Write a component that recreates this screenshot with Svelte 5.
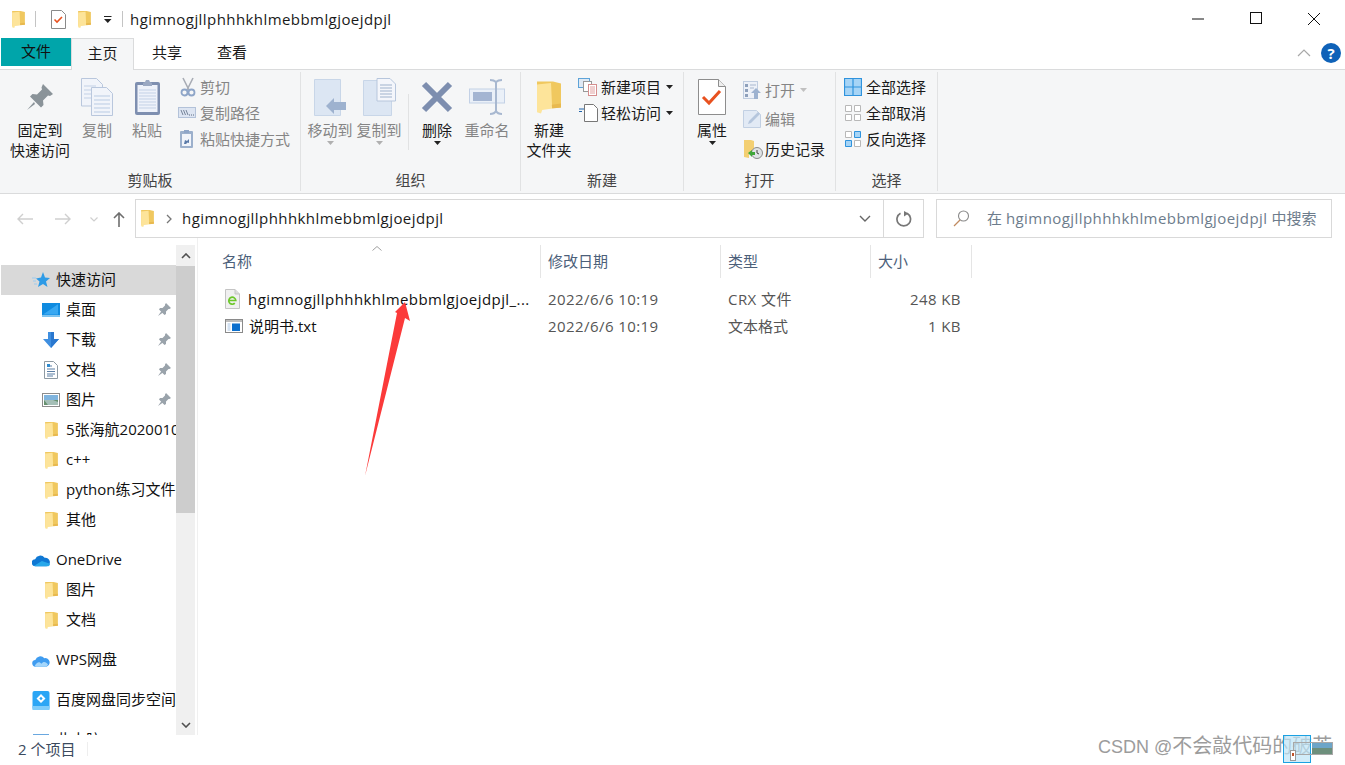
<script lang="ts">
	const title = 'hgimnogjllphhhkhlmebbmlgjoejdpjl';

	const quick = [
		{ label: '桌面', icon: desktop, pin: true },
		{ label: '下载', icon: download, pin: true },
		{ label: '文档', icon: doc, pin: true },
		{ label: '图片', icon: pics, pin: true },
		{ label: '5张海航20200106', icon: navFolder },
		{ label: 'c++', icon: navFolder },
		{ label: 'python练习文件夹', icon: navFolder },
		{ label: '其他', icon: navFolder }
	];
</script>

{#snippet folder(w, h)}
	<svg width={w} height={h} viewBox="1 1 12 16">
		<path d="M1 1h8l4 1v12l-8 .5-4 .5z" fill="#f0c85f" />
		<path d="M1 2.500l7-.8.6 12.800-5 .7L3 17l-2-.6z" fill="#fde49a" />
		<path d="M8.600 14.500L13 14V12l-4.600.6z" fill="#e8b94f" />
	</svg>
{/snippet}

{#snippet navFolder()}
	{@render folder(13, 17)}
{/snippet}

{#snippet desktop()}
	<svg width="18" height="14" viewBox="0 0 18 14"><rect width="18" height="12.500" fill="#0f8be0" /><path d="M1 11.500L16 1.200v10.300z" fill="#38a8f2" /><rect y="12.500" width="18" height="1.500" fill="#7cc3ef" /></svg>
{/snippet}

{#snippet download()}
	<svg width="18" height="16" viewBox="0 0 18 16"><path d="M6 0h6v7h5l-8 9-8-9h5z" fill="#3f8fe0" /><path d="M9 0h3v7h5l-8 9z" fill="#2a78cf" /></svg>
{/snippet}

{#snippet doc()}
	<svg width="14" height="18" viewBox="0 0 14 18"><path d="M.5.5h9l4 4v13H.5z" fill="#fff" stroke="#8e9aa3" /><path d="M3 5h5M3 8h8M3 10.500h8M3 13h8M3 15h6" stroke="#5b7ea5" /><path d="M3 3h3v3H3z" fill="#2f8bcf" /></svg>
{/snippet}

{#snippet pics()}
	<svg width="18" height="14" viewBox="0 0 18 14"><rect x=".5" y=".5" width="17" height="13" fill="#fff" stroke="#8c8c8c" /><rect x="2" y="2" width="14" height="5" fill="#7fb4de" /><rect x="2" y="7" width="14" height="5" fill="#67906f" /><path d="M2 7h9l5 2v3H6z" fill="#cfe0e8" opacity=".6" /></svg>
{/snippet}

{#snippet pinIcon()}
	<svg width="13" height="13" viewBox="0 0 13 13"><path d="M8 0l5 5-1.500 1-1 0-2.500 2.500V11L6.500 12 1 6.500 2 5h2.500L7 2.500v-1z" fill="#9aa3ab" /><path d="M3.500 8L0 13l5-3.500z" fill="#9aa3ab" /></svg>
{/snippet}

{#snippet caret(color)}
	<svg class="caret" width="7" height="4" viewBox="0 0 7 4"><path d="M0 0h7L3.500 4z" fill={color} /></svg>
{/snippet}

<div class="window">
	<header class="titlebar">
		<span class="qa-folder">{@render folder(13, 17)}</span>
		<i class="qa-sep"></i>
		<svg class="qa-check" width="15" height="19" viewBox="0 0 15 19"><path d="M.5.5h10l4 4v14H.5z" fill="#fff" stroke="#8a8a8a" /><path d="M3.500 9.500l2.500 2.500 5-5" fill="none" stroke="#e8511f" stroke-width="1.600" /></svg>
		<span class="qa-folder2">{@render folder(13, 17)}</span>
		<svg class="qa-more" width="8" height="7" viewBox="0 0 8 7"><path d="M0 0h7.500v1H0zM0 3h7.500L3.800 7z" fill="#222" /></svg>
		<i class="qa-sep second"></i>
		<span class="win-title latin">{title}</span>
		<div class="win-controls">
			<svg width="14" height="14" viewBox="0 0 14 14"><path d="M1 7h12" stroke="#111" /></svg>
			<svg width="14" height="14" viewBox="0 0 14 14"><rect x="1.500" y=".5" width="11" height="11" fill="none" stroke="#111" /></svg>
			<svg width="14" height="14" viewBox="0 0 14 14"><path d="M1 1l12 12M13 1L1 13" stroke="#111" /></svg>
		</div>
	</header>

	<nav class="tabs">
		<span class="tab tab-file">文件</span>
		<span class="tab tab-home">主页</span>
		<span class="tab tab-share">共享</span>
		<span class="tab tab-view">查看</span>
		<div class="tabs-right">
			<svg width="14" height="8" viewBox="0 0 14 8"><path d="M1 7l6-6 6 6" fill="none" stroke="#a8a8a8" stroke-width="1.200" /></svg>
			<span class="help">?</span>
		</div>
	</nav>

	<section class="ribbon">
		<div class="group g-clip">
			<div class="group-body">
				<div class="big w60">
					<span class="big-icon">
						<svg width="28" height="28" viewBox="0 0 28 28"><path d="M17 1l10 10-3 2-2-.5-5 5 .500 4.500-2.500 2.500L4 13.500 6.500 11l4.500.5 5-5-.5-2z" fill="#8a9399" /><path d="M8 19L1 27l8-6z" fill="#8a9399" /></svg>
					</span>
					<span class="big-label">固定到<br />快速访问</span>
				</div>
				<div class="big w54 off">
					<span class="big-icon">
						<svg width="32" height="38" viewBox="0 0 32 38"><path d="M.5.5h15l6 6V28H.5z" fill="#f1f4fa" stroke="#b9c7dd" /><path d="M3 8h12M3 12h15M3 16h15M3 20h15" stroke="#c3d1e6" /><path d="M10.500 9.500h15l6 6v22h-21z" fill="#f1f4fa" stroke="#b9c7dd" /><path d="M13 18h16M13 22h16M13 26h16M13 30h16M13 34h16" stroke="#b9cbe3" /></svg>
					</span>
					<span class="big-label">复制</span>
				</div>
				<div class="big w46 off">
					<span class="big-icon">
						<svg width="27" height="37" viewBox="0 0 27 37"><rect x="1" y="3" width="25" height="33" rx="2" fill="#7e8fb0" /><rect x="3.500" y="6" width="20" height="27" fill="#eef2fa" /><path d="M5 11h17M5 14h17M5 17h17M5 20h17M5 23h17M5 26h17M5 29h17" stroke="#c3d1e6" /><path d="M9 4l2-1 1-2h3l1 2 2 1v3H9z" fill="#9aa8c2" /></svg>
					</span>
					<span class="big-label">粘贴</span>
				</div>
				<div class="small-col clip-col off">
					<div class="small">
						<svg width="20" height="20" viewBox="0 0 20 20"><path d="M5 1l6 12M15 1L9 13" stroke="#a8adb5" stroke-width="1.600" /><circle cx="6.500" cy="15.500" r="3" fill="none" stroke="#8ea5c8" stroke-width="1.800" /><circle cx="13.500" cy="15.500" r="3" fill="none" stroke="#8ea5c8" stroke-width="1.800" /></svg>
						<span>剪切</span>
					</div>
					<div class="small">
						<svg width="20" height="12" viewBox="0 0 20 12"><rect x=".5" y=".5" width="17" height="10" fill="#dde5f2" stroke="#b3c2d9" /><path d="M3 3l2 5M5.500 3l2 5M8 3l2 5" stroke="#5a6a82" stroke-width=".8" /><path d="M11 8h1M13 8h1M15 8h1" stroke="#5a6a82" /></svg>
						<span>复制路径</span>
					</div>
					<div class="small">
						<svg width="20" height="20" viewBox="0 0 20 20"><rect x="2" y="2" width="13" height="17" rx="1" fill="#9cb0cc" /><rect x="4" y="5" width="9" height="12" fill="#f1f4fa" /><path d="M6 1h5v3H6z" fill="#8ea5c8" /><path d="M6 15l1-4 2 1 2-2v4l-1.500-.5L8 15z" fill="#5a7aa8" /></svg>
						<span>粘贴快捷方式</span>
					</div>
				</div>
			</div>
			<div class="group-name">剪贴板</div>
		</div>

		<div class="group g-org">
			<div class="group-body">
				<div class="big w50 off">
					<span class="big-icon">
						<svg width="33" height="37" viewBox="0 0 33 37"><path d="M.5.5h26v36H.5z" fill="#dce6f3" stroke="#c8d6e8" /><path d="M12 27L20 19v4h12v8H20v4z" fill="#9eb2cf" /></svg>
					</span>
					<span class="big-label">移动到</span>
					{@render caret('#b0b0b0')}
				</div>
				<div class="big w48 off">
					<span class="big-icon">
						<svg width="33" height="38" viewBox="0 0 33 38"><path d="M.5 2.500h28v35H.5z" fill="#dce6f3" stroke="#c8d6e8" /><path d="M14 .5h13l5.500 5.500v17H14z" fill="#f4f6fb" stroke="#b7c6dc" /><path d="M17 7h12M17 10h12M17 13h12M17 16h12M17 19h12" stroke="#9fb2cc" /></svg>
					</span>
					<span class="big-label">复制到</span>
					{@render caret('#b0b0b0')}
				</div>
				<i class="inner-sep"></i>
				<div class="big w46">
					<span class="big-icon">
						<svg width="32" height="32" viewBox="0 0 32 32"><path d="M3 3l26 26M29 3L3 29" stroke="#7d8eaf" stroke-width="6" /></svg>
					</span>
					<span class="big-label">删除</span>
					{@render caret('#222')}
				</div>
				<div class="big w54 off">
					<span class="big-icon">
						<svg width="36" height="36" viewBox="0 0 36 36"><rect x=".5" y="10" width="35" height="14" fill="#eaf0f8" stroke="#c3d1e6" /><rect x="4" y="13" width="19" height="9" fill="#a4b5d2" /><path d="M21 1c4 0 5 1 6 2 1-1 2-2 6-2M27 3v29M21 35c4 0 5-1 6-3 1 2 2 3 6 3" fill="none" stroke="#a8b8d0" stroke-width="2" /></svg>
					</span>
					<span class="big-label">重命名</span>
				</div>
			</div>
			<div class="group-name">组织</div>
		</div>

		<div class="group g-new">
			<div class="group-body">
				<div class="big w48">
					<span class="big-icon">{@render folder(24, 35)}</span>
					<span class="big-label">新建<br />文件夹</span>
				</div>
				<div class="small-col new-col">
					<div class="small">
						<svg width="20" height="18" viewBox="0 0 20 18"><rect x=".5" y=".5" width="11" height="9" fill="#dfe9f4" stroke="#5da3d8" /><rect x="5.500" y="3.500" width="8" height="10" fill="#fff" stroke="#999" /><rect x="10.500" y="6.500" width="8" height="11" fill="#fff" stroke="#d58e8e" /><path d="M12 9h5M12 11h5M12 13h5M12 15h5" stroke="#e0a0a0" /></svg>
						<span>新建项目</span>
						{@render caret('#222')}
					</div>
					<div class="small">
						<svg width="20" height="18" viewBox="0 0 20 18"><path d="M6.500.5h9l4 4v13h-13z" fill="#fff" stroke="#777" /><path d="M1 5h5M1 7.500h3" stroke="#2165ac" stroke-width="1.200" /></svg>
						<span>轻松访问</span>
						{@render caret('#222')}
					</div>
				</div>
			</div>
			<div class="group-name">新建</div>
		</div>

		<div class="group g-open">
			<div class="group-body">
				<div class="big w48">
					<span class="big-icon">
						<svg width="28" height="36" viewBox="0 0 28 36"><path d="M.5.5h20l7 7v28H.5z" fill="#fff" stroke="#8d8d8d" /><path d="M20.500.5v7h7" fill="#eee" stroke="#8d8d8d" /><path d="M5 18l6 6L22 12" fill="none" stroke="#e8511f" stroke-width="3" /></svg>
					</span>
					<span class="big-label">属性</span>
					{@render caret('#222')}
				</div>
				<div class="small-col open-col">
					<div class="small off">
						<svg width="20" height="18" viewBox="0 0 20 18"><rect x=".5" y=".5" width="14" height="17" fill="#edf1f8" stroke="#c0cde0" /><path d="M2 3h3v3H2zM2 8h3v3H2zM2 13h3v3H2z" fill="#8ea0bb" /><path d="M7 4h6M7 7h4" stroke="#a9b8cf" /><path d="M13 7l5 5h-3v6h-4v-6H8z" fill="#9db2d0" /></svg>
						<span>打开</span>
						{@render caret('#c0c0c0')}
					</div>
					<div class="small off">
						<svg width="20" height="18" viewBox="0 0 20 18"><path d="M.5.500h13l4 4v13H.5z" fill="#e2eaf5" stroke="#c2d0e3" /><path d="M5 14l1-3 9-9 2 2-9 9z" fill="#b5c6dd" /></svg>
						<span>编辑</span>
					</div>
					<div class="small">
						<svg width="20" height="20" viewBox="0 0 20 20"><path d="M1 1h7l3 1v12l-5 1v4l-5-1z" fill="#f3cf72" /><circle cx="14" cy="14" r="5.500" fill="#dfe3e6" stroke="#8a8a8a" /><path d="M14 11v3l2 1" fill="none" stroke="#444" /><path d="M5 14l4-3v2h3v3H9v2z" fill="#3fa63a" /></svg>
						<span>历史记录</span>
					</div>
				</div>
			</div>
			<div class="group-name">打开</div>
		</div>

		<div class="group g-select">
			<div class="group-body">
				<div class="small-col select-col">
					<div class="small">
						<svg width="18" height="18" viewBox="0 0 18 18"><path d="M.5.5h17v17H.5zM9 .5v17M.5 9h17" fill="#a6d4f6" stroke="#2f93dd" stroke-width="1.200" /></svg>
						<span>全部选择</span>
					</div>
					<div class="small">
						<svg width="18" height="18" viewBox="0 0 18 18"><path d="M1.500 1.500h6v6h-6zM10.500 1.500h6v6h-6zM1.500 10.500h6v6h-6zM10.500 10.500h6v6h-6z" fill="#fff" stroke="#b8b8b8" /></svg>
						<span>全部取消</span>
					</div>
					<div class="small">
						<svg width="18" height="18" viewBox="0 0 18 18"><path d="M1.500 1.500h6v6h-6zM10.500 10.500h6v6h-6z" fill="#fff" stroke="#b8b8b8" /><path d="M10.500 1.500h6v6h-6zM1.500 10.500h6v6h-6z" fill="#a6d4f6" stroke="#2f93dd" /></svg>
						<span>反向选择</span>
					</div>
				</div>
			</div>
			<div class="group-name">选择</div>
		</div>
	</section>

	<div class="addressbar">
		<div class="nav-buttons">
			<svg class="nb-back" width="16" height="12" viewBox="0 0 16 12"><path d="M6 1L1 6l5 5M1 6h15" fill="none" stroke="#cfcfcf" stroke-width="1.400" /></svg>
			<svg class="nb-forward" width="16" height="12" viewBox="0 0 16 12"><path d="M10 1l5 5-5 5M15 6H0" fill="none" stroke="#cfcfcf" stroke-width="1.400" /></svg>
			<svg class="nb-down" width="8" height="5" viewBox="0 0 8 5"><path d="M.5.500L4 4 7.500.5" fill="none" stroke="#cfcfcf" stroke-width="1.200" /></svg>
			<svg class="nb-up" width="12" height="15" viewBox="0 0 12 15"><path d="M1 6l5-5 5 5M6 1v14" fill="none" stroke="#6e6e6e" stroke-width="1.600" /></svg>
		</div>
		<div class="address">
			<span class="addr-folder">{@render folder(13, 17)}</span>
			<svg class="addr-chev" width="6" height="10" viewBox="0 0 6 10"><path d="M1 1l4 4-4 4" fill="none" stroke="#777" stroke-width="1.300" /></svg>
			<span class="addr-text latin">{title}</span>
			<svg class="addr-down" width="12" height="7" viewBox="0 0 12 7"><path d="M1 1l5 5 5-5" fill="none" stroke="#666" stroke-width="1.400" /></svg>
			<span class="addr-refresh">
				<svg width="16" height="16" viewBox="0 0 16 16"><path d="M11 2.200A6.800 6.800 0 1 1 4.500 2.200" fill="none" stroke="#777" stroke-width="1.700" /><path d="M8 0v5.500L12.500 2.500z" fill="#777" /></svg>
			</span>
		</div>
		<div class="search">
			<svg width="17" height="17" viewBox="0 0 17 17"><circle cx="10.500" cy="6" r="5" fill="none" stroke="#8a8a8a" stroke-width="1.100" /><path d="M7 10l-6 6" stroke="#c08a60" stroke-width="1.300" /></svg>
			<span>在 <span class="latin">{title}</span> 中搜索</span>
		</div>
	</div>

	<main class="content">
		<aside class="sidebar">
			<div class="tree">
				<div class="row head active">
					<svg width="18" height="17" viewBox="0 0 18 17"><path d="M11 0l2 5.500 5 .5-4 3.500L15.500 15 11 12l-5 3 1.500-5.500L4 6.500 9 5.500z" fill="#2e9be6" /><path d="M0 6h4M1 9h3M2 12h3" stroke="#9ccbef" /></svg>
					<span class="row-text">快速访问</span>
				</div>
				{#each quick as item}
					<div class="row child">
						<span class="row-icon">{@render item.icon()}</span>
						<span class="row-text">{item.label}</span>
						{#if item.pin}<span class="pin">{@render pinIcon()}</span>{/if}
					</div>
				{/each}
				<div class="row head gap">
					<svg width="20" height="13" viewBox="0 0 20 13"><path d="M4 13a4 4 0 0 1-.5-8A6 6 0 0 1 14 3.500 4.500 4.500 0 0 1 16 13z" fill="#0f78d4" /><path d="M2 12.500L11 7l9 3c0 2-1.500 3-3 3H4z" fill="#28a8ea" /></svg>
					<span class="row-text">OneDrive</span>
				</div>
				<div class="row child"><span class="row-icon">{@render navFolder()}</span><span class="row-text">图片</span></div>
				<div class="row child"><span class="row-icon">{@render navFolder()}</span><span class="row-text">文档</span></div>
				<div class="row head gap">
					<svg width="19" height="13" viewBox="0 0 19 13"><path d="M4 13a3.500 3.500 0 0 1-.5-7A5.500 5.500 0 0 1 13 4a4.500 4.500 0 0 1 2 9z" fill="#3f9cf0" /><path d="M3 12c2-4 5-5 7-2 2-3 5-2 7 1l-2 2H4z" fill="#a4d6fb" /></svg>
					<span class="row-text">WPS网盘</span>
				</div>
				<div class="row head gap">
					<svg width="17" height="19" viewBox="0 0 17 19"><rect width="17" height="19" rx="2" fill="#2ca6f5" /><rect y="15" width="17" height="4" fill="#7fcdfb" /><path d="M8.500 3l4.500 4.500L8.500 12 4 7.500zM8.500 5.800L6.800 7.500l1.700 1.700 1.700-1.700z" fill="#fff" /></svg>
					<span class="row-text">百度网盘同步空间</span>
				</div>
				<div class="row head gap">
					<svg width="18" height="15" viewBox="0 0 18 15"><rect x="1" y="1" width="16" height="10" fill="#6aa8e0" /></svg>
					<span class="row-text">此电脑</span>
				</div>
			</div>
			<div class="scrollbar">
				<span class="sb-btn">
					<svg width="10" height="6" viewBox="0 0 10 6"><path d="M1 5l4-4 4 4" fill="none" stroke="#505050" stroke-width="1.600" /></svg>
				</span>
				<span class="sb-track"><span class="sb-thumb"></span></span>
				<span class="sb-btn">
					<svg width="10" height="6" viewBox="0 0 10 6"><path d="M1 1l4 4 4-4" fill="none" stroke="#505050" stroke-width="1.600" /></svg>
				</span>
			</div>
		</aside>

		<div class="files">
			<div class="columns">
				<span>名称</span>
				<span>修改日期</span>
				<span>类型</span>
				<span>大小</span>
				<svg class="sort" width="10" height="5" viewBox="0 0 10 5"><path d="M.5 4.500L5 .5l4.500 4" fill="none" stroke="#a0a0a0" /></svg>
			</div>
			<div class="file first">
				<span class="fname latin">
					<svg class="crx-icon" width="15" height="20" viewBox="0 0 15 20"><path d="M.5.5h9.500l4.500 4.500v14.500H.5z" fill="#f0f0f0" stroke="#c4c4c4" /><path d="M10 .5V5h4.500" fill="#dcdcdc" stroke="#c4c4c4" /><path d="M3.800 11.500h7a3.500 3.500 0 1 0-1 2.700" fill="none" stroke="#6cc72a" stroke-width="1.700" /></svg>
					{title}_...
				</span>
				<span class="latin">2022/6/6 10:19</span>
				<span class="latin">CRX 文件</span>
				<span class="fsize latin">248 KB</span>
			</div>
			<div class="file">
				<span class="fname">
					<svg width="18" height="14" viewBox="0 0 18 14"><rect x=".5" y=".5" width="17" height="13" fill="#fff" stroke="#8a8a8a" /><rect x="1" y="1" width="16" height="2" fill="#bdbdbd" /><path d="M2.500 5h3M2.500 7h3M2.500 9h3M2.500 11h3" stroke="#a8c4e4" /><rect x="7" y="4.500" width="8" height="7.500" fill="#0c6fcd" /></svg>
					说明书.txt
				</span>
				<span class="latin">2022/6/6 10:19</span>
				<span>文本格式</span>
				<span class="fsize latin">1 KB</span>
			</div>
		</div>
	</main>

	<footer class="statusbar">
		<span>2 个项目</span>
		<i></i>
	</footer>

	<svg class="red-arrow" width="50" height="180" viewBox="0 0 50 180"><path d="M1 176L33 13 31 12 41 2 46 21 41 18z" fill="#fb3a3a" /></svg>
	<div class="watermark"><span>CSDN @</span>不会敲代码的破茧</div>
	<div class="drag-ghost"></div>
	<svg class="drag-thumb" width="52" height="28" viewBox="0 0 52 28">
		<rect x="9.500" y="7.500" width="39" height="12" fill="none" stroke="#a8a8a8" />
		<rect x="28" y="8" width="20" height="5" fill="#6da5c8" />
		<rect x="28" y="13" width="20" height="6" fill="#6d8f7c" />
		<rect x="6.500" y="15.500" width="5" height="10" fill="#fff" stroke="#999" />
		<rect x="8" y="18" width="2" height="3" fill="#c0532a" />
	</svg>
</div>

<style>
	:global(body) {
		margin: 0;
		background: #fff;
	}

	.window {
		position: relative;
		width: 1345px;
		height: 765px;
		overflow: hidden;
		display: flex;
		flex-direction: column;
		background: #fff;
		color: #1a1a1a;
		font-family: 'Open Sans', 'Noto Sans CJK SC', sans-serif;
		font-size: 15px;
		line-height: 20px;
	}

	i {
		display: block;
	}

	svg {
		display: block;
		flex: none;
	}

	/* Open Sans runs narrower than the original UI font on latin strings */
	.latin {
		letter-spacing: 0.43px;
	}

	/* title bar */
	.titlebar {
		height: 38px;
		flex: none;
		display: flex;
		align-items: center;
	}

	.qa-folder {
		margin-left: 12px;
	}

	.qa-sep {
		width: 1px;
		height: 16px;
		background: #c4c4c4;
		margin-left: 10px;
	}

	.qa-check {
		margin-left: 15px;
	}

	.qa-folder2 {
		margin-left: 12px;
	}

	.qa-more {
		margin-left: 13px;
	}

	.qa-sep.second {
		margin-left: 10px;
	}

	.win-title {
		margin-left: 7px;
	}

	.win-controls {
		margin-left: auto;
		display: flex;
		gap: 44px;
		margin-right: 24px;
		margin-top: -1px;
	}

	/* tabs */
	.tabs {
		height: 32px;
		flex: none;
		display: flex;
		position: relative;
		border-bottom: 1px solid #dadbdc;
		box-sizing: border-box;
	}

	.tab {
		display: flex;
		align-items: center;
		justify-content: center;
		height: 31px;
		box-sizing: border-box;
		padding-bottom: 3px;
	}

	.tab-file {
		width: 70px;
		height: 28px;
		margin-left: 1px;
		background: #00a5aa;
		color: #111;
		padding-bottom: 2px;
	}

	.tab-home {
		width: 63px;
		background: #f5f6f7;
		border: 1px solid #dadbdc;
		border-bottom: none;
		height: 32px;
		position: relative;
		z-index: 1;
	}

	.tab-share {
		width: 66px;
	}

	.tab-view {
		width: 64px;
	}

	.tabs-right {
		margin-left: auto;
		display: flex;
		align-items: center;
		gap: 10px;
		margin-right: 4px;
		margin-top: -2px;
	}

	.help {
		width: 20px;
		height: 20px;
		border-radius: 50%;
		background: #0f62b8;
		color: #fff;
		font-weight: 700;
		font-size: 15px;
		display: flex;
		align-items: center;
		justify-content: center;
	}

	/* ribbon */
	.ribbon {
		height: 124px;
		flex: none;
		display: flex;
		background: #f5f6f7;
		border-bottom: 1px solid #dadbdc;
		box-sizing: border-box;
	}

	.group {
		display: flex;
		flex-direction: column;
		box-sizing: border-box;
		margin-top: 2px;
		margin-bottom: 2px;
		border-right: 1px solid #e1e2e3;
	}

	.g-clip {
		width: 301px;
	}

	.g-org {
		width: 220px;
	}

	.g-new {
		width: 163px;
	}

	.g-open {
		width: 152px;
	}

	.g-select {
		width: 102px;
	}

	.group-body {
		flex: 1;
		display: flex;
		padding-top: 2px;
		padding-left: 4px;
		min-height: 0;
	}

	.g-clip .group-body {
		padding-left: 10px;
	}

	.group-name {
		height: 20px;
		flex: none;
		text-align: center;
		color: #444;
		margin-bottom: 1px;
	}

	.big {
		display: flex;
		flex-direction: column;
		align-items: center;
		text-align: center;
	}

	.big-icon {
		height: 46px;
		display: flex;
		align-items: center;
		justify-content: center;
	}

	.big-label {
		line-height: 20px;
	}

	.off {
		color: #858585;
	}

	.caret {
		margin-top: 1px;
	}

	.w46 {
		width: 46px;
	}

	.w48 {
		width: 48px;
	}

	.w50 {
		width: 50px;
	}

	.w54 {
		width: 54px;
	}

	.w60 {
		width: 60px;
	}

	.inner-sep {
		width: 1px;
		height: 56px;
		margin: 20px 5px 0;
		background: #e1e2e3;
	}

	.small-col {
		display: flex;
		flex-direction: column;
	}

	.small {
		height: 26px;
		display: flex;
		align-items: center;
		gap: 2px;
		white-space: nowrap;
	}

	.small .caret {
		margin-left: 3px;
		margin-top: 0;
	}

	.clip-col {
		margin-left: 8px;
	}

	.new-col {
		margin-left: 5px;
	}

	.new-col .small span {
		margin-left: 1px;
	}

	.open-col {
		margin-left: 7px;
		padding-top: 1px;
	}

	.open-col .small {
		height: 29.500px;
	}

	.select-col {
		margin-left: 4px;
	}

	.select-col .small {
		gap: 4px;
	}

	/* address bar */
	.addressbar {
		height: 44px;
		flex: none;
		display: flex;
		align-items: flex-end;
		box-sizing: border-box;
	}

	.nav-buttons {
		width: 135px;
		height: 38px;
		flex: none;
		display: flex;
		align-items: center;
	}

	.nb-back {
		margin-left: 17px;
	}

	.nb-forward {
		margin-left: 22px;
	}

	.nb-down {
		margin-left: 19px;
	}

	.nb-up {
		margin-left: 15px;
	}

	.address {
		width: 789px;
		height: 39px;
		flex: none;
		box-sizing: border-box;
		border: 1px solid #d9d9d9;
		display: flex;
		align-items: center;
	}

	.addr-folder {
		margin-left: 5px;
	}

	.addr-chev {
		margin-left: 12px;
	}

	.addr-text {
		margin-left: 10px;
		margin-bottom: 2px;
	}

	.addr-down {
		margin-left: auto;
		margin-right: 12px;
	}

	.addr-refresh {
		width: 39px;
		height: 100%;
		border-left: 1px solid #d9d9d9;
		display: flex;
		align-items: center;
		justify-content: center;
	}

	.search {
		width: 396px;
		height: 39px;
		flex: none;
		margin-left: 12px;
		box-sizing: border-box;
		border: 1px solid #d9d9d9;
		display: flex;
		align-items: center;
		gap: 17px;
		padding-left: 16px;
		color: #6d7c8c;
		white-space: nowrap;
	}

	.search > span {
		margin-bottom: 2px;
	}

	/* main */
	.content {
		flex: 1;
		min-height: 0;
		display: flex;
	}

	.sidebar {
		width: 198px;
		flex: none;
		display: flex;
		box-sizing: border-box;
		border-right: 1px solid #f0f0f0;
		padding-right: 2px;
	}

	.tree {
		width: 176px;
		flex: none;
		overflow: hidden;
		padding-top: 27px;
		box-sizing: border-box;
	}

	.row {
		height: 30px;
		display: flex;
		align-items: center;
		white-space: nowrap;
		position: relative;
		overflow: hidden;
		color: #111;
	}

	.row-text {
		margin-bottom: 2px;
	}

	.head {
		padding-left: 32px;
		gap: 6px;
	}

	.head svg {
		width: 18px;
	}

	.active {
		background: #d9d9d9;
		margin-left: 1px;
		padding-left: 31px;
		height: 30px;
	}

	.gap {
		margin-top: 10px;
	}

	.child {
		padding-left: 42px;
	}

	.row-icon {
		width: 24px;
		flex: none;
		display: flex;
		justify-content: center;
		box-sizing: border-box;
		padding-right: 6px;
	}

	.pin {
		position: absolute;
		left: 158px;
		top: 8px;
		background: #fff;
	}

	.scrollbar {
		width: 19px;
		flex: none;
		display: flex;
		flex-direction: column;
		margin-top: 7px;
		background: #f0f0f0;
	}

	.sb-btn {
		height: 21px;
		flex: none;
		display: flex;
		align-items: center;
		justify-content: center;
	}

	.sb-track {
		flex: 1;
	}

	.sb-thumb {
		display: block;
		height: 247px;
		background: #cdcdcd;
	}

	/* file list */
	.files {
		flex: 1;
		min-width: 0;
		padding-left: 16px;
		padding-top: 7px;
		position: relative;
	}

	.columns,
	.file {
		display: grid;
		grid-template-columns: 327px 180px 150px 101px;
	}

	.columns {
		height: 33px;
		color: #4c607a;
	}

	.columns span {
		border-right: 1px solid #e5e5e5;
		padding-left: 7px;
		line-height: 33px;
		box-sizing: border-box;
	}

	.columns span:first-child {
		padding-left: 8px;
	}

	.sort {
		position: absolute;
		left: 174px;
		top: 8px;
	}

	.file {
		height: 27px;
		align-items: center;
		color: #555;
	}

	.file.first {
		margin-top: 7px;
	}

	.file span {
		padding-left: 7px;
		white-space: nowrap;
	}

	.file .fname {
		display: flex;
		align-items: center;
		gap: 6px;
		padding-left: 11px;
		color: #111;
	}

	.crx-icon {
		margin-right: 2px;
	}

	.file .fsize {
		text-align: right;
		padding: 0 11px 0 0;
	}

	/* status bar */
	.statusbar {
		height: 30px;
		flex: none;
		display: flex;
		align-items: center;
		padding-left: 18px;
		padding-bottom: 2px;
		box-sizing: border-box;
		color: #3b4a5e;
	}

	.statusbar i {
		width: 1px;
		height: 14px;
		background: #eee;
		margin-left: 12px;
	}

	/* annotations laid over the screenshot */
	.red-arrow {
		position: absolute;
		left: 364px;
		top: 300px;
	}

	.watermark {
		position: absolute;
		left: 1098px;
		top: 734px;
		font-family: 'Liberation Sans', 'Noto Sans CJK SC', sans-serif;
		font-size: 20px;
		line-height: 24px;
		color: #9c9c9c;
		white-space: nowrap;
	}

	.watermark span {
		font-size: 18px;
	}

	.drag-ghost {
		position: absolute;
		left: 1283px;
		top: 735px;
		width: 28px;
		height: 28px;
		box-sizing: border-box;
		border: 1px solid #1ba1e2;
		background: rgba(190, 228, 246, 0.7);
	}

	.drag-thumb {
		position: absolute;
		left: 1284px;
		top: 735px;
	}
</style>
